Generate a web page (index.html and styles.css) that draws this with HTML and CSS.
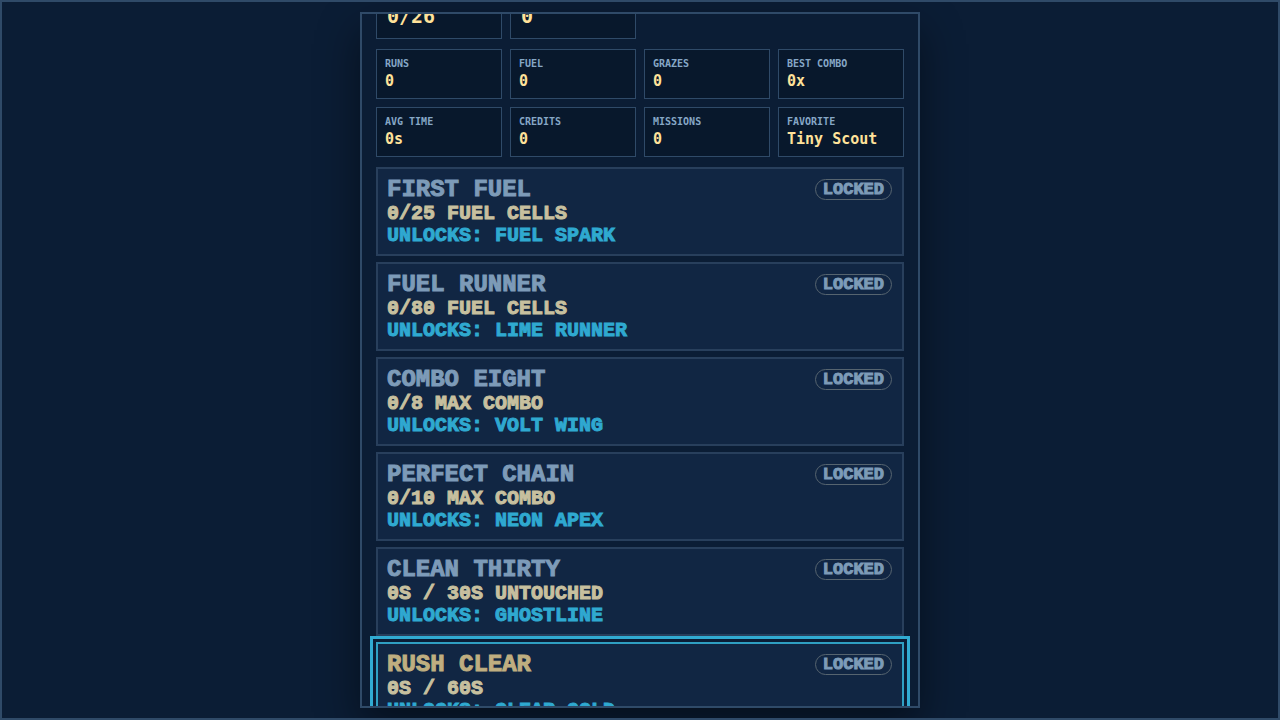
FILE: index.html
```html
<!DOCTYPE html>
<html lang="en">
<head>
    <meta charset="UTF-8">
    <meta name="viewport" content="width=device-width, initial-scale=1.0">
    <title>Achievements</title>
    <link rel="stylesheet" href="styles.css">
</head>
<body>

    <main class="panel">
        <div class="summary">
            <div class="summary-box">0/26</div>
            <div class="summary-box">0</div>
        </div>

        <dl class="stats">
            <div class="stat"><dt>RUNS</dt><dd>0</dd></div>
            <div class="stat"><dt>FUEL</dt><dd>0</dd></div>
            <div class="stat"><dt>GRAZES</dt><dd>0</dd></div>
            <div class="stat"><dt>BEST COMBO</dt><dd>0x</dd></div>
            <div class="stat"><dt>AVG TIME</dt><dd>0s</dd></div>
            <div class="stat"><dt>CREDITS</dt><dd>0</dd></div>
            <div class="stat"><dt>MISSIONS</dt><dd>0</dd></div>
            <div class="stat"><dt>FAVORITE</dt><dd>Tiny Scout</dd></div>
        </dl>

        <ul class="missions">
            <li class="mission" tabindex="0">
                <div class="mission-text">
                    <h2>FIRST FUEL</h2>
                    <p class="progress">0/25 FUEL CELLS</p>
                    <p class="reward">UNLOCKS: FUEL SPARK</p>
                </div>
                <span class="badge">LOCKED</span>
            </li>
            <li class="mission" tabindex="0">
                <div class="mission-text">
                    <h2>FUEL RUNNER</h2>
                    <p class="progress">0/80 FUEL CELLS</p>
                    <p class="reward">UNLOCKS: LIME RUNNER</p>
                </div>
                <span class="badge">LOCKED</span>
            </li>
            <li class="mission" tabindex="0">
                <div class="mission-text">
                    <h2>COMBO EIGHT</h2>
                    <p class="progress">0/8 MAX COMBO</p>
                    <p class="reward">UNLOCKS: VOLT WING</p>
                </div>
                <span class="badge">LOCKED</span>
            </li>
            <li class="mission" tabindex="0">
                <div class="mission-text">
                    <h2>PERFECT CHAIN</h2>
                    <p class="progress">0/10 MAX COMBO</p>
                    <p class="reward">UNLOCKS: NEON APEX</p>
                </div>
                <span class="badge">LOCKED</span>
            </li>
            <li class="mission" tabindex="0">
                <div class="mission-text">
                    <h2>CLEAN THIRTY</h2>
                    <p class="progress">0S / 30S UNTOUCHED</p>
                    <p class="reward">UNLOCKS: GHOSTLINE</p>
                </div>
                <span class="badge">LOCKED</span>
            </li>
            <li class="mission selected" tabindex="0">
                <div class="mission-text">
                    <h2>RUSH CLEAR</h2>
                    <p class="progress">0S / 60S</p>
                    <p class="reward">UNLOCKS: CLEAR GOLD</p>
                </div>
                <span class="badge">LOCKED</span>
            </li>
        </ul>
    </main>

</body>
</html>
```
FILE: styles.css
```css
* {
    box-sizing: border-box;
}
body {
    margin: 0;
    height: 100vh;
    padding: 10px;
    border: 2px solid #2f4a68;
    background-color: #0b1d35;
    font-family: "DejaVu Sans Mono", monospace;
    font-weight: bold;
    overflow: hidden;
}
h2, p, dl, dd, ul {
    margin: 0;
    padding: 0;
}
.panel {
    max-width: 560px;
    height: 100%;
    margin: 0 auto;
    padding: 0 14px;
    border: 2px solid #2f4a68;
    background-color: #0b1d35;
    box-shadow: 0 18px 40px rgba(0, 0, 0, 0.45);
    overflow: hidden;
}
.summary, .stats {
    display: grid;
    grid-template-columns: repeat(4, 1fr);
    gap: 8px;
    margin-bottom: 10px;
}
/* scrolled partly out of the panel */
.summary {
    margin-top: -11px;
}
.summary-box {
    padding: 0 10px 10px;
    border: 1px solid #2f4a68;
    background-color: #08182c;
    color: #ffe29a;
    font-size: 20px;
    line-height: 24px;
}
.stat {
    padding: 8px 8px 6px;
    border: 1px solid #2f4a68;
    background-color: #08182c;
}
.stat dt {
    color: #86a7c6;
    font-size: 10px;
    line-height: 12px;
}
.stat dd {
    color: #ffe29a;
    font-size: 15px;
    line-height: 22px;
}
.missions {
    display: flex;
    flex-direction: column;
    gap: 6px;
    list-style: none;
}
.mission {
    display: flex;
    justify-content: space-between;
    align-items: flex-start;
    padding: 10px 10px 7px 9px;
    border: 2px solid #283f5c;
    background-color: #112643;
    font-family: "Liberation Mono", monospace;
    -webkit-text-stroke: 1px;
}
.mission h2 {
    margin-bottom: 3px;
    color: #7d9bb8;
    font-size: 24px;
    line-height: 21px;
}
.mission p {
    font-size: 20px;
    line-height: 22px;
}
.mission .progress {
    color: #c7c09f;
}
.mission .reward {
    color: #2fa9d0;
}
.mission.selected {
    border-color: #2f9fc2;
    outline: 3px solid #31abd2;
    outline-offset: 3px;
}
.mission.selected h2 {
    color: #bfae80;
}
.badge {
    padding: 0 7px;
    border: 1px solid #56646f;
    border-radius: 999px;
    color: #7d9bb8;
    font-size: 17px;
    line-height: 19px;
}
```
